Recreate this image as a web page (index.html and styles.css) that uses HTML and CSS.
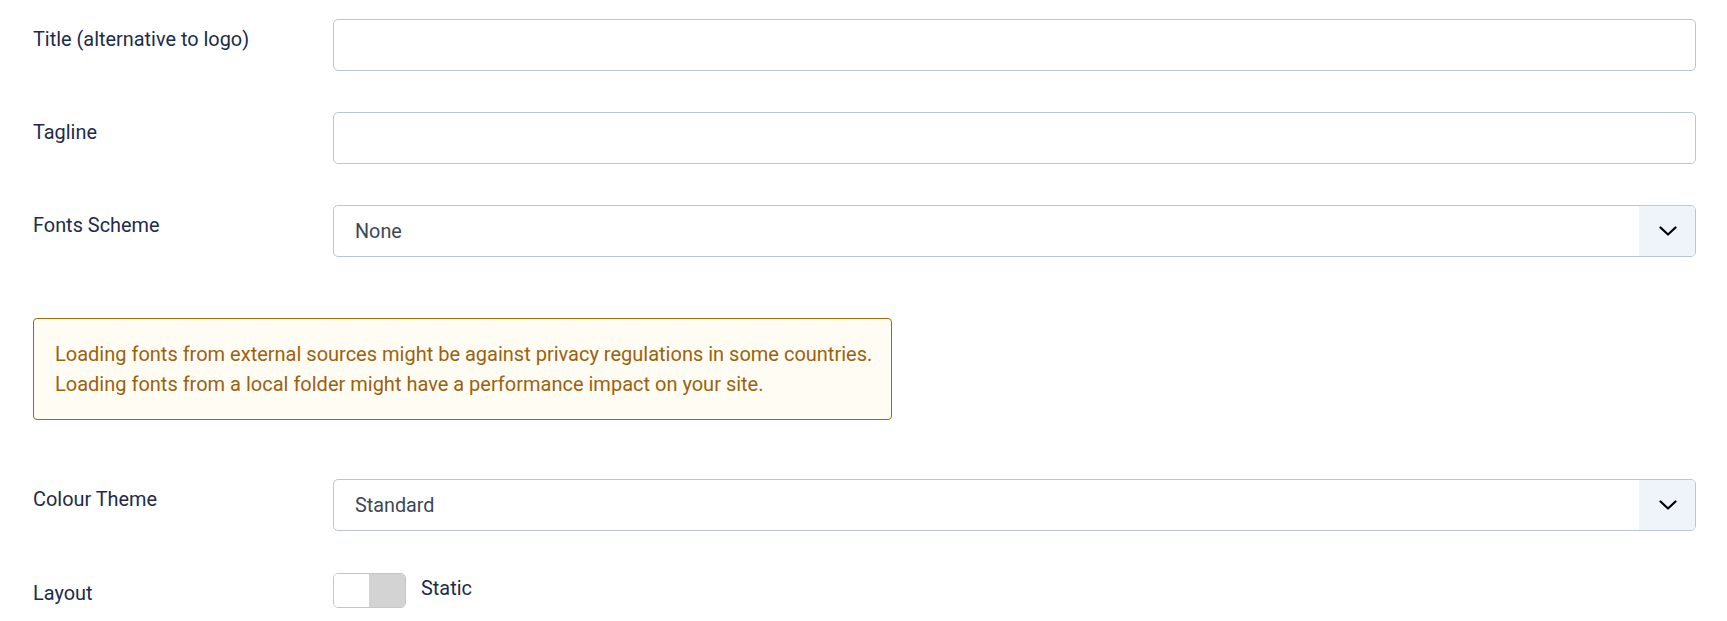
FILE: index.html
```html
<!DOCTYPE html>
<html lang="en">
<head>
<meta charset="utf-8">
<title>Template settings</title>
<link rel="stylesheet" href="styles.css">
</head>
<body>
<form class="settings">
  <div class="row row-gap">
    <label class="label" for="title">Title (alternative to logo)</label>
    <div class="control"><input id="title" class="field" type="text"></div>
  </div>
  <div class="row row-gap">
    <label class="label" for="tagline">Tagline</label>
    <div class="control"><input id="tagline" class="field" type="text"></div>
  </div>
  <div class="row">
    <label class="label">Fonts Scheme</label>
    <div class="control">
      <div class="field select">
        <span class="select-value">None</span>
        <span class="caret"><svg width="18" height="10" viewBox="0 0 18 10"><polyline points="1.5,1.5 9,8.5 16.5,1.5" fill="none" stroke="#000" stroke-width="2.2" stroke-linecap="round" stroke-linejoin="round"/></svg></span>
      </div>
    </div>
  </div>
  <div class="alert">
    <p>Loading fonts from external sources might be against privacy regulations in some countries.</p>
    <p>Loading fonts from a local folder might have a performance impact on your site.</p>
  </div>
  <div class="row row-gap-wide">
    <label class="label">Colour Theme</label>
    <div class="control">
      <div class="field select">
        <span class="select-value">Standard</span>
        <span class="caret"><svg width="18" height="10" viewBox="0 0 18 10"><polyline points="1.5,1.5 9,8.5 16.5,1.5" fill="none" stroke="#000" stroke-width="2.2" stroke-linecap="round" stroke-linejoin="round"/></svg></span>
      </div>
    </div>
  </div>
  <div class="row">
    <label class="label">Layout</label>
    <div class="control toggle-row">
      <span class="switch"><span class="switch-on"></span><span class="switch-off"></span></span>
      <span class="switch-text">Static</span>
    </div>
  </div>
</form>
</body>
</html>
```

FILE: styles.css
```css
* { box-sizing: border-box; }
html, body { margin: 0; padding: 0; background: #fff; }
body {
  font-family: Roboto, "Liberation Sans", Arial, sans-serif;
  font-size: 19.9px;
  line-height: 1.5;
  color: #1c2c4a;
}
.settings {
  padding: 19px 31px 0 33px;
  width: 1727px;
}
.row {
  display: flex;
  align-items: flex-start;
}
.row-gap { margin-bottom: 41px; }
.row-gap-wide { margin-bottom: 42px; }
.label {
  width: 300px;
  flex: none;
  padding-top: 6px;
  color: #1c2c4a;
}
.control {
  width: 1363px;
  flex: none;
}
.field {
  display: block;
  width: 100%;
  height: 52px;
  border: 1px solid #b9c5da;
  border-radius: 5px;
  background: #fff;
  font: inherit;
  color: #3e4756;
  padding: 0 21px;
  margin: 0;
}
.select {
  display: flex;
  align-items: center;
  padding: 0 0 0 21px;
  overflow: hidden;
  font-size: 19.8px;
}
.select-value {
  flex: 1;
  padding-top: 2px;
  color: #3e4756;
}
.caret {
  width: 56px;
  height: 100%;
  background: #eff4fb;
  display: flex;
  align-items: center;
  justify-content: center;
  padding-left: 2px;
}
.alert {
  width: 859px;
  margin: 61px 0 59px 0;
  padding: 20px 21px 20px 21px;
  border: 1px solid #a46a05;
  border-radius: 4px;
  background: #fffcf4;
  color: #9a620f;
  font-size: 20px;
}
.alert p { margin: 0; white-space: nowrap; }
.toggle-row {
  display: flex;
  align-items: center;
  gap: 15px;
}
.switch {
  display: flex;
  width: 73px;
  height: 35px;
  border: 1px solid #b9c8e0;
  border-radius: 5px;
  overflow: hidden;
}
.switch-on { width: 35px; background: #fff; }
.switch-off { flex: 1; background: #d3d3d3; }
.switch-text {
  color: #1c2c4a;
  padding-bottom: 4px;
}
```
